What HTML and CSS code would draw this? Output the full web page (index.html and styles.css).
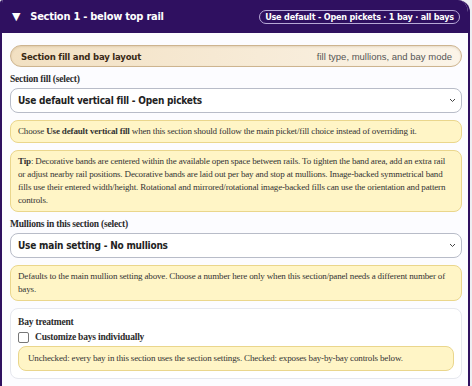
FILE: index.html
```html
<!DOCTYPE html>
<html lang="en">
<head>
  <meta charset="UTF-8">
  <meta name="viewport" content="width=device-width, initial-scale=1.0">
  <title>Section 1 - below top rail</title>
  <link rel="stylesheet" href="styles.css">
</head>
<body>
  <div class="panel">
    <div class="panel-head">
      <span class="caret">&#9660;</span>
      <span class="panel-title">Section 1 - below top rail</span>
      <span class="badge">Use default - Open pickets · 1 bay · all bays</span>
    </div>

    <div class="panel-body">
      <div class="group-bar">
        <span class="group-title">Section fill and bay layout</span>
        <span class="group-hint">fill type, mullions, and bay mode</span>
      </div>

      <div class="field">
        <label class="field-label" for="fill">Section fill (select)</label>
        <div class="select">
          <span>Use default vertical fill - Open pickets</span>
          <svg class="chev" width="7" height="5" viewBox="0 0 7 5"><path d="M1 1 L3.5 3.5 L6 1" fill="none" stroke="#444" stroke-width="1"/></svg>
        </div>
      </div>

      <div class="note">Choose <b>Use default vertical fill</b> when this section should follow the main picket/fill choice instead of overriding it.</div>

      <div class="note">
        <b>Tip</b>: Decorative bands are centered within the available open space between rails. To tighten the band area, add an extra rail or adjust nearby rail positions. Decorative bands are laid out per bay and stop at mullions. Image-backed symmetrical band fills use their entered width/height. Rotational and mirrored/rotational image-backed fills can use the orientation and pattern controls.
      </div>

      <div class="field">
        <label class="field-label" for="mullions">Mullions in this section (select)</label>
        <div class="select">
          <span>Use main setting - No mullions</span>
          <svg class="chev" width="7" height="5" viewBox="0 0 7 5"><path d="M1 1 L3.5 3.5 L6 1" fill="none" stroke="#444" stroke-width="1"/></svg>
        </div>
      </div>

      <div class="note">Defaults to the main mullion setting above. Choose a number here only when this section/panel needs a different number of bays.</div>

      <div class="card">
        <div class="card-title">Bay treatment</div>
        <label class="check">
          <span class="box"></span>
          <span>Customize bays individually</span>
        </label>
        <div class="note">Unchecked: every bay in this section uses the section settings. Checked: exposes bay-by-bay controls below.</div>
      </div>
    </div>
  </div>
</body>
</html>
```

FILE: styles.css
```css
body {
  margin: 0;
  background-color: #eeeef2;
  font-family: 'Liberation Serif', serif;
  color: #2b2b2b;
  letter-spacing: -0.2px;
}

.panel {
  width: 466px;
  height: 386px;
  background-color: #fcfcff;
  border-left: 2px solid #2f1060;
  border-right: 2px solid #2f1060;
  border-radius: 3px 12px 0 0;
  overflow: hidden;
}

.panel-head {
  display: flex;
  align-items: center;
  height: 33px;
  padding: 0 8px 0 10px;
  background-color: #2f1060;
  color: #fff;
}

.caret {
  font-family: 'DejaVu Sans', sans-serif;
  font-size: 11px;
  margin-right: 10px;
}

.panel-title {
  font-family: 'DejaVu Sans', sans-serif;
  font-weight: bold;
  font-size: 11px;
  font-stretch: condensed;
  letter-spacing: -0.25px;
}

.badge {
  margin-left: auto;
  padding: 1px 5px;
  border: 1px solid #b7a9d6;
  border-radius: 10px;
  font-family: 'DejaVu Sans', sans-serif;
  font-weight: bold;
  font-size: 9px;
  font-stretch: condensed;
  letter-spacing: -0.2px;
}

.panel-body {
  display: flex;
  flex-direction: column;
  gap: 7px;
  padding: 12px 6px 0 8px;
}

.group-bar {
  display: flex;
  align-items: center;
  justify-content: space-between;
  height: 20px;
  padding: 0 9px 0 10px;
  border: 1px solid #cdb48f;
  border-radius: 12px;
  background: linear-gradient(to right, #f2e0c2, #fbf4e8);
  box-shadow: inset 0 1px 2px rgba(120, 90, 40, 0.15);
}

.group-title {
  font-family: 'DejaVu Sans', sans-serif;
  font-weight: bold;
  font-size: 9.5px;
  font-stretch: condensed;
  color: #3a2a16;
}

.group-hint {
  font-family: 'Liberation Sans', sans-serif;
  font-size: 9.5px;
  letter-spacing: 0;
  color: #555;
}

.field {
  display: flex;
  flex-direction: column;
  gap: 3px;
}

.field-label {
  font-weight: bold;
  font-size: 9.5px;
  line-height: 11px;
  color: #2b2b2b;
}

.select {
  display: flex;
  align-items: center;
  justify-content: space-between;
  height: 23px;
  padding: 0 5px 0 7px;
  background-color: #fff;
  border: 1px solid #b8bcc8;
  border-radius: 8px;
  font-family: 'DejaVu Sans', sans-serif;
  font-weight: bold;
  font-size: 10px;
  font-stretch: condensed;
  color: #222;
}

.note {
  padding: 4px 7px;
  background-color: #fff5c6;
  border: 1px solid #ead68c;
  border-radius: 8px;
  font-size: 9px;
  line-height: 13px;
  letter-spacing: -0.15px;
  color: #333;
}

.card {
  display: flex;
  flex-direction: column;
  gap: 3px;
  padding: 8px 7px 7px 7px;
  background-color: #fff;
  border: 1px solid #e6e8ee;
  border-radius: 8px;
}

.card .note {
  padding: 5px 9px;
}

.card-title {
  font-weight: bold;
  font-size: 9.5px;
  line-height: 11px;
}

.check {
  display: flex;
  align-items: center;
  gap: 6px;
  font-weight: bold;
  font-size: 9.5px;
  line-height: 12px;
}

.box {
  width: 9px;
  height: 9px;
  border: 1px solid #777;
  border-radius: 2px;
  background-color: #fff;
}
```
